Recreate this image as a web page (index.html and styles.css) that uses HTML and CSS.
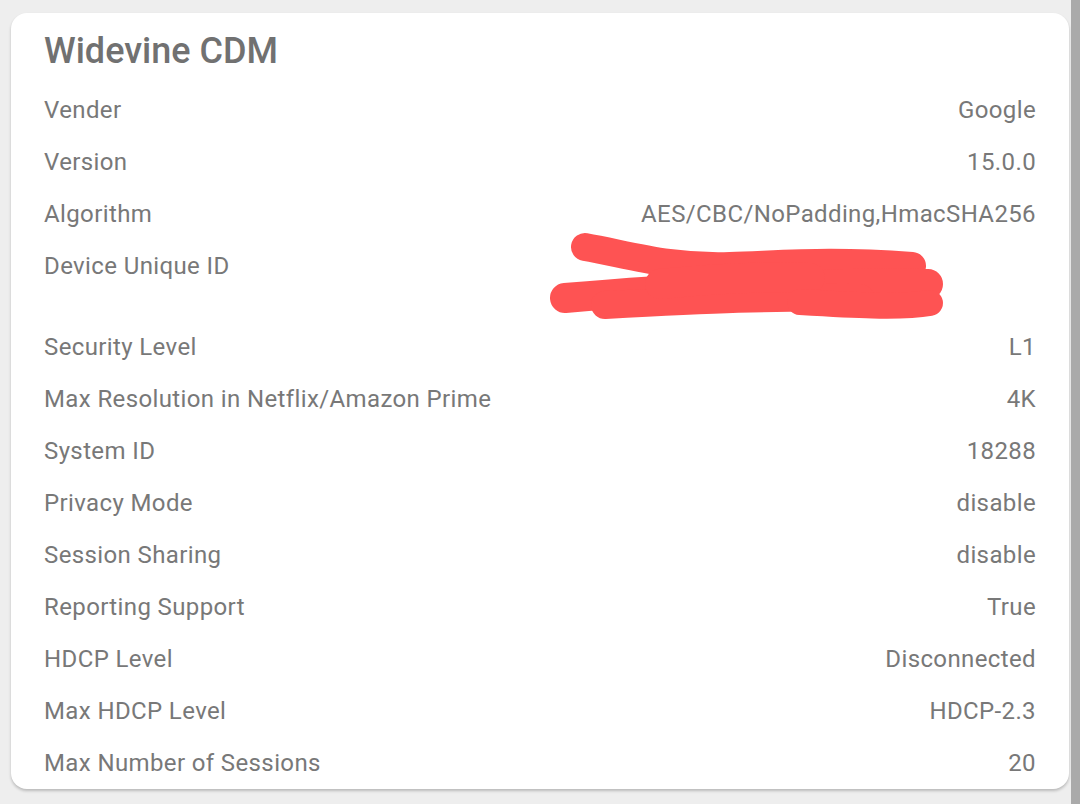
FILE: index.html
```html
<!DOCTYPE html>
<html lang="en">
<head>
<meta charset="utf-8">
<title>Widevine CDM</title>
<link rel="stylesheet" href="styles.css">
</head>
<body>
<div class="page">
  <main class="main">
    <section class="card">
      <h1 class="title">Widevine CDM</h1>
      <div class="row"><span class="label">Vender</span><span class="value">Google</span></div>
      <div class="row"><span class="label">Version</span><span class="value">15.0.0</span></div>
      <div class="row"><span class="label">Algorithm</span><span class="value">AES/CBC/NoPadding,HmacSHA256</span></div>
      <div class="row"><span class="label">Device Unique ID</span><span class="value value-multi">&nbsp;<br>&nbsp;</span></div>
      <div class="row"><span class="label">Security Level</span><span class="value">L1</span></div>
      <div class="row"><span class="label">Max Resolution in Netflix/Amazon Prime</span><span class="value">4K</span></div>
      <div class="row"><span class="label">System ID</span><span class="value">18288</span></div>
      <div class="row"><span class="label">Privacy Mode</span><span class="value">disable</span></div>
      <div class="row"><span class="label">Session Sharing</span><span class="value">disable</span></div>
      <div class="row"><span class="label">Reporting Support</span><span class="value">True</span></div>
      <div class="row"><span class="label">HDCP Level</span><span class="value">Disconnected</span></div>
      <div class="row"><span class="label">Max HDCP Level</span><span class="value">HDCP-2.3</span></div>
      <div class="row"><span class="label">Max Number of Sessions</span><span class="value">20</span></div>
    </section>
  </main>
  <div class="scrollbar"></div>
</div>
<svg class="scribble" width="1080" height="804" viewBox="0 0 1080 804" aria-hidden="true">
  <g fill="none" stroke="#fe5353" stroke-linecap="round" stroke-linejoin="round">
    <path stroke-width="28" d="M585,247 C630,255 670,268 730,266 S830,260 912,266"/>
    <path stroke-width="30" d="M565,298 C660,290 760,282 928,284"/>
    <path stroke-width="28" d="M605,305 C700,300 780,296 860,298"/>
    <path stroke-width="30" d="M660,284 C710,279 760,276 810,278"/>
    <path stroke-width="26" d="M800,302 C850,305 900,308 930,303"/>
  </g>
</svg>
</body>
</html>
```
FILE: styles.css
```css
html, body {
  margin: 0;
  padding: 0;
}
body {
  background: #eeeeee;
  font-family: Roboto, "Noto Sans", "Liberation Sans", sans-serif;
  color: #787878;
  width: 1080px;
  height: 804px;
  overflow: hidden;
  position: relative;
}
.page {
  display: flex;
  height: 804px;
}
.main {
  flex: 1;
  padding: 13px 2px 0 11px;
}
.scrollbar {
  width: 9px;
  background: #aaaaaa;
}
.card {
  background: #ffffff;
  border-radius: 16px;
  box-shadow: 0 2px 3px rgba(0, 0, 0, 0.22);
  padding: 17px 33px 0 33px;
}
.title {
  margin: 0 0 12px 0;
  font-size: 36px;
  line-height: 42px;
  font-weight: 500;
  color: #717171;
}
.row {
  display: flex;
  justify-content: space-between;
  align-items: flex-start;
  padding: 11.5px 0;
  font-size: 24px;
  line-height: 29px;
  letter-spacing: 0.38px;
}
.value {
  text-align: right;
}
.scribble {
  position: absolute;
  left: 0;
  top: 0;
  pointer-events: none;
}
```
